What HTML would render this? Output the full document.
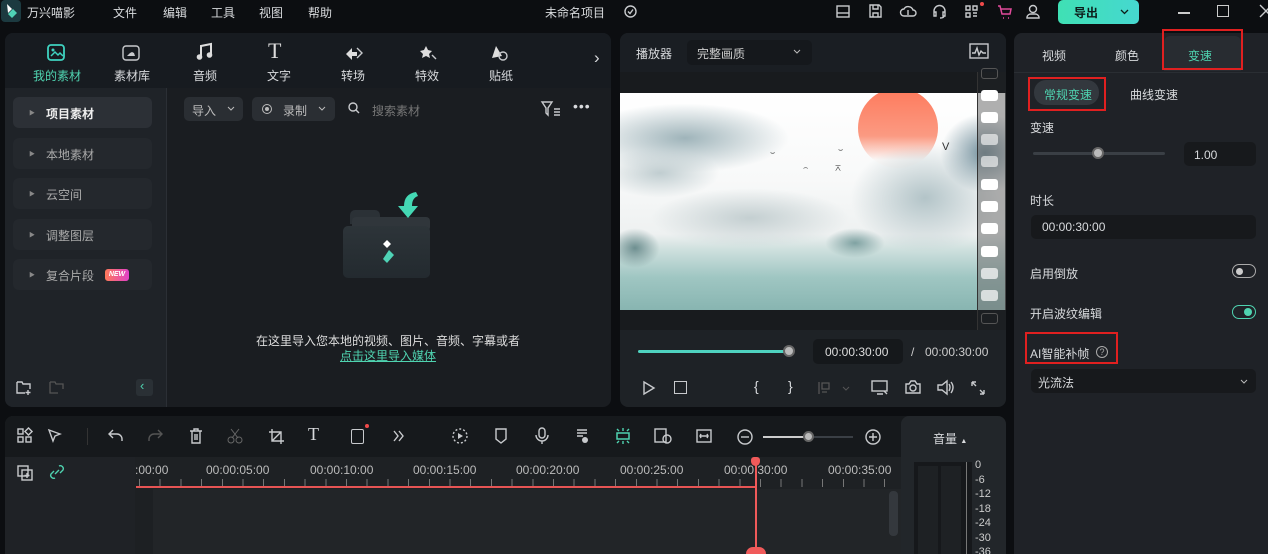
<!DOCTYPE html>
<html style="overflow:hidden"><head><meta charset="utf-8"><style>
*{margin:0;padding:0;box-sizing:border-box}
html,body{width:1268px;height:554px;overflow:hidden}
body{background:#0c0e11;font-family:"Liberation Sans","Noto Sans CJK SC",sans-serif;color:#d8dadd;font-size:12px;position:relative}
.a{position:absolute}
.t{position:absolute;white-space:nowrap}
svg{position:absolute;overflow:visible}
.ic{stroke:#c8cacd;fill:none;stroke-width:1.4}
.h{position:absolute;left:981px;width:17px;height:11px;border-radius:3px;background:#fff}
.ho{position:absolute;left:981px;width:17px;height:11px;border-radius:3px;border:1.3px solid #555}
</style></head><body>
<!-- title bar -->
<div class="a" style="left:1px;top:0;width:20px;height:22px;background:#1c3a40;border-radius:4px"></div>
<svg style="left:4px;top:3px" width="14" height="16"><path d="M3 1l5 5-4 4z" fill="#fff"/><path d="M9 6l4 4-5 5-4-4z" fill="#4fd3b6"/></svg>
<div class="t" style="left:27px;top:4px;font-size:12px">万兴喵影</div>
<div class="t" style="left:113px;top:4px">文件</div>
<div class="t" style="left:163px;top:4px">编辑</div>
<div class="t" style="left:211px;top:4px">工具</div>
<div class="t" style="left:259px;top:4px">视图</div>
<div class="t" style="left:308px;top:4px">帮助</div>
<div class="t" style="left:545px;top:4px">未命名项目</div>
<svg style="left:624px;top:5px" width="13" height="13"><circle cx="6.5" cy="6.5" r="5.5" class="ic" stroke="#888"/><path d="M4 6.5l2 2 3-4" class="ic" stroke="#888"/></svg>
<svg style="left:836px;top:5px" width="14" height="13"><rect x="1" y="1" width="12" height="11" class="ic"/><path d="M1 8h12" class="ic"/></svg>
<svg style="left:869px;top:4px" width="13" height="14"><path d="M1 1h9l2 2v10H1z M4 1v4h5V1 M4 13V9h5v4" class="ic"/></svg>
<svg style="left:900px;top:4px" width="16" height="14"><path d="M4 12a3.5 3.5 0 010-7 5 5 0 019 1 3 3 0 010 6z" class="ic"/><path d="M8 6v5" class="ic"/></svg>
<svg style="left:932px;top:4px" width="15" height="15"><path d="M2 9V7a5.5 5.5 0 0111 0v2 M2 8h2v4H2z M11 8h2v4h-2z M12 12q0 2-4 2" class="ic"/></svg>
<svg style="left:965px;top:5px" width="13" height="13"><path d="M1 1h4v4H1z M1 8h4v4H1z M8 1h4v4H8z M8 8h4 M8 11h4" class="ic"/></svg>
<div class="a" style="left:980px;top:2px;width:4px;height:4px;border-radius:50%;background:#f04a4a"></div>
<svg style="left:997px;top:5px" width="16" height="14"><path d="M1 1h2l2 8h8l1-5H4 M6 13h1 M11 13h1" stroke="#e04a9a" fill="none" stroke-width="1.5"/></svg>
<svg style="left:1026px;top:4px" width="14" height="15"><circle cx="7" cy="5" r="3.5" class="ic"/><path d="M1 14v-1a4 4 0 014-3h4a4 4 0 014 3v1z" class="ic"/></svg>
<div class="a" style="left:1058px;top:0;width:81px;height:24px;border-radius:5px;background:linear-gradient(90deg,#3fe0b4,#46d8d0)"></div>
<div class="t" style="left:1074px;top:4px;color:#0d1d1a;font-weight:bold">导出</div>
<svg style="left:1120px;top:9px" width="9" height="6"><path d="M1 1l3.5 3.5L8 1" stroke="#0d1d1a" fill="none" stroke-width="1.3"/></svg>
<div class="a" style="left:1178px;top:12px;width:12px;height:1.5px;background:#ccc"></div>
<div class="a" style="left:1217px;top:5px;width:12px;height:12px;border:1.5px solid #ccc"></div>
<svg style="left:1260px;top:5px" width="12" height="12"><path d="M0 0l12 12M12 0L0 12" class="ic"/></svg>

<!-- media panel -->
<div class="a" style="left:5px;top:33px;width:606px;height:374px;background:#1a1d21;border-radius:8px;overflow:hidden">
 <div class="a" style="left:0;top:0;width:606px;height:55px;background:#171b20"></div>
 <div class="a" style="left:0;top:55px;width:162px;height:319px;background:#1f2328;border-right:1px solid #2b2f35"></div>
</div>
<svg style="left:47px;top:44px" width="20" height="18"><rect x="1" y="1" width="16" height="15" rx="3" stroke="#3fd3c0" fill="none" stroke-width="1.8"/><path d="M4 12l4-4 3 3 2-2 3 3" stroke="#3fd3c0" fill="none" stroke-width="1.5"/><circle cx="6" cy="6" r="1.5" fill="#3fd3c0"/></svg>
<div class="t" style="left:33px;top:67px;color:#4fd3b0">我的素材</div>
<svg style="left:122px;top:45px" width="18" height="16"><rect x="1" y="1" width="16" height="14" rx="3" class="ic" stroke-width="1.6"/><path d="M5 11h8l-1-3-2-1-2 1z" fill="#c8cacd"/></svg>
<div class="t" style="left:114px;top:67px">素材库</div>
<svg style="left:196px;top:43px" width="18" height="18"><path d="M5 14V3l10-2v11" stroke="#ddd" fill="none" stroke-width="2"/><circle cx="3.5" cy="14" r="2.8" fill="#ddd"/><circle cx="13.5" cy="12" r="2.8" fill="#ddd"/></svg>
<div class="t" style="left:193px;top:67px">音频</div>
<div class="t" style="left:268px;top:38px;font-size:22px;font-family:'Liberation Serif',serif;color:#ddd">T</div>
<div class="t" style="left:267px;top:67px">文字</div>
<svg style="left:344px;top:45px" width="22" height="16"><path d="M2 9l6-6v4h5v4H8v4z" fill="#ddd"/><path d="M13 3l5 5-5 5" class="ic"/></svg>
<div class="t" style="left:341px;top:67px">转场</div>
<svg style="left:418px;top:43px" width="20" height="18"><path d="M8 3l2 4 4 1-3 3 1 4-4-2-4 2 1-4-3-3 4-1z" fill="#ddd"/><path d="M14 12l4 4" class="ic"/></svg>
<div class="t" style="left:415px;top:67px">特效</div>
<svg style="left:490px;top:44px" width="20" height="18"><path d="M2 14L6 2l6 10z" fill="#ddd"/><circle cx="13" cy="12" r="4" class="ic"/></svg>
<div class="t" style="left:489px;top:67px">贴纸</div>
<div class="t" style="left:594px;top:48px;font-size:17px">›</div>

<!-- sidebar items -->
<div class="a" style="left:13px;top:97px;width:139px;height:31px;background:#2c3036;border-radius:6px"></div>
<div class="t" style="left:29px;top:108px;font-size:6px;color:#888">▶</div><div class="t" style="left:46px;top:105px;font-weight:bold;color:#eee">项目素材</div>
<div class="a" style="left:13px;top:138px;width:139px;height:31px;background:#24282d;border-radius:6px"></div>
<div class="t" style="left:29px;top:149px;font-size:6px;color:#888">▶</div><div class="t" style="left:46px;top:146px;color:#aaa">本地素材</div>
<div class="a" style="left:13px;top:178px;width:139px;height:31px;background:#24282d;border-radius:6px"></div>
<div class="t" style="left:29px;top:189px;font-size:6px;color:#888">▶</div><div class="t" style="left:46px;top:186px;color:#aaa">云空间</div>
<div class="a" style="left:13px;top:219px;width:139px;height:31px;background:#24282d;border-radius:6px"></div>
<div class="t" style="left:29px;top:230px;font-size:6px;color:#888">▶</div><div class="t" style="left:46px;top:227px;color:#aaa">调整图层</div>
<div class="a" style="left:13px;top:259px;width:139px;height:31px;background:#24282d;border-radius:6px"></div>
<div class="t" style="left:29px;top:270px;font-size:6px;color:#888">▶</div><div class="t" style="left:46px;top:267px;color:#aaa">复合片段</div>
<div class="t" style="left:105px;top:269px;width:24px;height:12px;border-radius:3px;background:linear-gradient(90deg,#ff7a59,#e040c8);font-size:7px;font-style:italic;font-weight:bold;color:#fff;text-align:center;line-height:12px">NEW</div>
<svg style="left:16px;top:380px" width="16" height="15"><path d="M1 2h5l1 2h7v5 M1 2v11h8 M12 10v5 M9.5 12.5h5" class="ic"/></svg>
<svg style="left:49px;top:380px" width="16" height="15"><path d="M1 2h5l1 2h7v5 M1 2v11h8" stroke="#555" fill="none" stroke-width="1.3"/></svg>
<div class="a" style="left:136px;top:379px;width:17px;height:17px;background:#2a3035;border-radius:3px"></div>
<div class="t" style="left:140px;top:378px;color:#4fd3b0;font-size:13px">‹</div>

<!-- media toolbar -->
<div class="a" style="left:184px;top:97px;width:59px;height:24px;background:#2a2e33;border-radius:5px"></div>
<div class="t" style="left:192px;top:102px;color:#bbb">导入</div>
<svg style="left:227px;top:106px" width="8" height="5"><path d="M1 1l3 3 3-3" stroke="#bbb" fill="none"/></svg>
<div class="a" style="left:252px;top:97px;width:83px;height:24px;background:#2a2e33;border-radius:5px"></div>
<div class="a" style="left:262px;top:104px;width:10px;height:10px;border:1.5px solid #bbb;border-radius:50%"></div><div class="a" style="left:265px;top:107px;width:4px;height:4px;background:#bbb;border-radius:50%"></div>
<div class="t" style="left:283px;top:102px;color:#bbb">录制</div>
<svg style="left:318px;top:106px" width="8" height="5"><path d="M1 1l3 3 3-3" stroke="#bbb" fill="none"/></svg>
<svg style="left:348px;top:102px" width="12" height="12"><circle cx="5" cy="5" r="4" class="ic"/><path d="M8 8l3 3" class="ic"/></svg>
<div class="t" style="left:372px;top:102px;color:#777">搜索素材</div>
<svg style="left:541px;top:101px" width="20" height="16"><path d="M1 1h10l-4 6v7l-2-2V7z" class="ic"/><path d="M13 8h6M13 11h6M13 14h6" class="ic"/></svg>
<div class="t" style="left:573px;top:98px;font-size:14px;letter-spacing:1px">•••</div>

<!-- folder illustration -->
<div class="a" style="left:350px;top:210px;width:30px;height:14px;background:#2b3136;border-radius:5px 5px 0 0"></div>
<div class="a" style="left:352px;top:217px;width:78px;height:14px;background:#30363b;border-radius:4px"></div>
<div class="a" style="left:343px;top:226px;width:87px;height:52px;background:linear-gradient(#2d3439,#232a2f);border-radius:5px"></div>
<svg style="left:380px;top:238px" width="22" height="30"><path d="M3 6l4-4 4 4-4 4z" fill="#fff"/><path d="M9 12l5 5-7 8-4-4z" fill="#4fd3b6"/></svg>
<svg style="left:396px;top:190px" width="28" height="30"><path d="M20 2q-12 2-12 14h-6l10 12 10-12h-6q0-8 6-10z" fill="#44d8b4"/></svg>
<div class="t" style="left:256px;top:332px;color:#ddd;font-size:12px">在这里导入您本地的视频、图片、音频、字幕或者</div>
<div class="t" style="left:340px;top:347px;color:#4fd3b0;text-decoration:underline">点击这里导入媒体</div>

<!-- player -->
<div class="a" style="left:620px;top:33px;width:386px;height:374px;background:#1e2226;border-radius:8px;overflow:hidden">
 <div class="a" style="left:0;top:0;width:386px;height:39px;background:#1a1e23"></div>
 <div class="a" style="left:0;top:39px;width:386px;height:258px;background:#181b1e"></div>
</div>
<div class="t" style="left:636px;top:45px">播放器</div>
<div class="a" style="left:687px;top:40px;width:125px;height:25px;background:#15181c;border-radius:5px"></div>
<div class="t" style="left:697px;top:45px;color:#ccc">完整画质</div>
<svg style="left:793px;top:49px" width="8" height="5"><path d="M1 1l3 3 3-3" stroke="#bbb" fill="none"/></svg>
<svg style="left:969px;top:43px" width="20" height="16"><rect x="1" y="1" width="18" height="14" class="ic"/><path d="M3 10h3l2-5 2 7 2-4 2 2h3" class="ic"/></svg>
<!-- video image -->
<div class="a" style="left:620px;top:93px;width:385px;height:217px;overflow:hidden;background:linear-gradient(#ffffff 0%,#f8f9f9 40%,#eef1f1 65%,#cfe0de 72%,#9fc6c2 85%,#88b5b1 100%)">
 <div class="a" style="left:238px;top:-5px;width:80px;height:80px;border-radius:50%;background:linear-gradient(#fe7a5c 0%,#fb9a82 60%,rgba(255,240,235,0.2) 90%)"></div>
 <div class="a" style="left:-40px;top:10px;width:210px;height:70px;border-radius:50%;background:radial-gradient(#9fb4ba,rgba(200,212,214,0) 70%)"></div>
 <div class="a" style="left:-20px;top:55px;width:120px;height:50px;border-radius:50%;background:radial-gradient(#c0cdd0,rgba(200,212,214,0) 70%)"></div>
 <div class="a" style="left:30px;top:95px;width:200px;height:60px;border-radius:50%;background:radial-gradient(#c4cfd1,rgba(220,228,229,0) 70%)"></div>
 <div class="a" style="left:230px;top:50px;width:150px;height:110px;border-radius:50%;background:radial-gradient(#b3c4c8,rgba(180,196,200,0) 70%)"></div>
 <div class="a" style="left:320px;top:20px;width:90px;height:80px;border-radius:50%;background:radial-gradient(#6f8d9a,rgba(120,150,160,0) 70%)"></div>
 <div class="a" style="left:-10px;top:135px;width:50px;height:40px;border-radius:50%;background:radial-gradient(#6e8f90,rgba(110,143,144,0) 70%)"></div>
 <div class="a" style="left:205px;top:135px;width:60px;height:30px;border-radius:50%;background:radial-gradient(#7fa2a2,rgba(127,162,162,0) 70%)"></div>
 <div class="t" style="left:150px;top:55px;font-size:8px;color:#222">⌣</div>
 <div class="t" style="left:218px;top:52px;font-size:8px;color:#222">⌣</div>
 <div class="t" style="left:183px;top:70px;font-size:8px;color:#222">⌢</div>
 <div class="t" style="left:214px;top:70px;font-size:8px;color:#222">⌅</div>
 <div class="t" style="left:322px;top:48px;font-size:11px;color:#333">V</div>
</div>
<div class="a" style="left:977px;top:72px;width:29px;height:258px;background:rgba(110,110,110,0.55);border-left:1px solid #333"></div>
<div class="a" style="left:977px;top:72px;width:29px;height:21px;background:#1c1f22;border-left:1px solid #333"></div>
<div class="a" style="left:977px;top:310px;width:29px;height:20px;background:#1c1f22;border-left:1px solid #333"></div>
<div class="ho" style="top:68px"></div>
<div class="h" style="top:90px"></div><div class="h" style="top:112px"></div><div class="h" style="top:134px;opacity:.6"></div><div class="h" style="top:156px;opacity:.6"></div><div class="h" style="top:179px"></div><div class="h" style="top:201px"></div><div class="h" style="top:223px"></div><div class="h" style="top:246px"></div><div class="h" style="top:268px;opacity:.7"></div><div class="h" style="top:290px;opacity:.7"></div>
<div class="ho" style="top:313px"></div>
<!-- controls -->
<div class="a" style="left:638px;top:350px;width:152px;height:3px;background:#4fd3c0;border-radius:2px"></div>
<div class="a" style="left:783px;top:345px;width:12px;height:12px;border-radius:50%;background:#bbb;border:2px solid #666"></div>
<div class="a" style="left:813px;top:339px;width:90px;height:25px;background:#15181b;border-radius:5px"></div>
<div class="t" style="left:825px;top:345px;color:#ddd">00:00:30:00</div>
<div class="t" style="left:911px;top:345px;color:#ccc">/</div>
<div class="t" style="left:925px;top:345px;color:#ccc">00:00:30:00</div>
<svg style="left:643px;top:381px" width="12" height="14"><path d="M1 1l10 6-10 6z" class="ic"/></svg>
<div class="a" style="left:674px;top:381px;width:13px;height:13px;border:1.4px solid #c8cacd"></div>
<div class="t" style="left:754px;top:378px;font-size:14px">{</div><div class="t" style="left:788px;top:378px;font-size:14px">}</div>
<svg style="left:818px;top:381px" width="14" height="14"><path d="M1 1v12 M4 2h7v6H4z M4 11h5" stroke="#555" fill="none" stroke-width="1.3"/></svg>
<svg style="left:842px;top:386px" width="8" height="5"><path d="M1 1l3 3 3-3" stroke="#555" fill="none"/></svg>
<svg style="left:871px;top:380px" width="18" height="15"><rect x="1" y="1" width="15" height="10" class="ic"/><path d="M6 14h6 M13 11l3 3" class="ic"/></svg>
<svg style="left:905px;top:380px" width="16" height="14"><path d="M1 4h3l2-3h4l2 3h3v9H1z" class="ic"/><circle cx="8" cy="8" r="3" class="ic"/></svg>
<svg style="left:937px;top:380px" width="18" height="15"><path d="M1 5h4l5-4v13l-5-4H1z M12 4q2 3 0 7 M14 2q4 5 0 11" class="ic"/></svg>
<svg style="left:971px;top:381px" width="14" height="14"><path d="M1 1l4 4M1 1v4M1 1h4 M13 13l-4-4M13 13V9M13 13H9" class="ic"/></svg>

<!-- right panel -->
<div class="a" style="left:1014px;top:33px;width:254px;height:521px;background:#1f2227;border-radius:8px 0 0 0"></div>
<div class="t" style="left:1042px;top:47px">视频</div>
<div class="t" style="left:1115px;top:47px">颜色</div>
<div class="a" style="left:1164px;top:36px;width:77px;height:35px;background:#282c31;border-radius:6px 6px 0 0"></div>
<div class="a" style="left:1162px;top:29px;width:81px;height:41px;border:2px solid #e02020"></div>
<div class="t" style="left:1188px;top:47px;color:#4fd3b0">变速</div>
<div class="a" style="left:1014px;top:72px;width:254px;height:1px;background:#2a2e33"></div>
<div class="a" style="left:1034px;top:80px;width:65px;height:25px;background:#33383e;border-radius:12px"></div>
<div class="a" style="left:1028px;top:77px;width:78px;height:34px;border:2px solid #e02020"></div>
<div class="t" style="left:1044px;top:86px;color:#4fd3b0">常规变速</div>
<div class="t" style="left:1130px;top:86px">曲线变速</div>
<div class="t" style="left:1030px;top:119px">变速</div>
<div class="a" style="left:1033px;top:152px;width:132px;height:3px;background:#3a3f45;border-radius:2px"></div>
<div class="a" style="left:1092px;top:147px;width:12px;height:12px;border-radius:50%;background:#bbb;border:2px solid #666"></div>
<div class="a" style="left:1184px;top:142px;width:72px;height:24px;background:#17191c;border-radius:5px"></div>
<div class="t" style="left:1194px;top:148px">1.00</div>
<div class="t" style="left:1030px;top:192px">时长</div>
<div class="a" style="left:1031px;top:215px;width:225px;height:24px;background:#17191c;border-radius:5px"></div>
<div class="t" style="left:1042px;top:220px">00:00:30:00</div>
<div class="t" style="left:1030px;top:265px">启用倒放</div>
<div class="a" style="left:1232px;top:264px;width:24px;height:14px;border:1.5px solid #aaa;border-radius:7px"></div>
<div class="a" style="left:1236px;top:268px;width:7px;height:7px;background:#ccc;border-radius:50%"></div>
<div class="t" style="left:1030px;top:305px">开启波纹编辑</div>
<div class="a" style="left:1232px;top:305px;width:24px;height:14px;border:1.5px solid #4fd3b0;border-radius:7px"></div>
<div class="a" style="left:1244px;top:308px;width:8px;height:8px;background:#4fd3b0;border-radius:50%"></div>
<div class="a" style="left:1025px;top:332px;width:93px;height:32px;border:2px solid #e02020"></div>
<div class="t" style="left:1030px;top:345px">AI智能补帧</div>
<div class="a" style="left:1096px;top:346px;width:12px;height:12px;border:1px solid #aaa;border-radius:50%;font-size:9px;text-align:center;line-height:11px;color:#aaa">?</div>
<div class="a" style="left:1031px;top:369px;width:225px;height:24px;background:#17191c;border-radius:5px"></div>
<div class="t" style="left:1038px;top:374px">光流法</div>
<svg style="left:1240px;top:379px" width="8" height="5"><path d="M1 1l3 3 3-3" stroke="#bbb" fill="none"/></svg>

<!-- timeline -->
<div class="a" style="left:5px;top:416px;width:1001px;height:138px;background:#222528;border-radius:8px 8px 0 0;overflow:hidden">
 <div class="a" style="left:0;top:0;width:1001px;height:41px;background:#16191c"></div>
 <div class="a" style="left:0;top:41px;width:130px;height:97px;background:#1f2226"></div>
 <div class="a" style="left:130px;top:41px;width:766px;height:32px;background:#1e2124"></div>
 <div class="a" style="left:130px;top:73px;width:18px;height:65px;background:#1d2023"></div>
 <div class="a" style="left:884px;top:75px;width:9px;height:45px;background:#34383d;border-radius:4px"></div>
 <div class="a" style="left:896px;top:0;width:105px;height:138px;background:#22262a;border-radius:8px 8px 0 0"></div>
</div>
<svg style="left:17px;top:428px" width="16" height="16"><rect x="1" y="1" width="5" height="5" class="ic"/><rect x="9" y="1" width="5" height="5" class="ic" transform="rotate(45 11.5 3.5)"/><rect x="1" y="9" width="5" height="5" class="ic"/><rect x="9" y="9" width="5" height="5" class="ic"/></svg>
<svg style="left:47px;top:428px" width="16" height="16"><path d="M2 2l11 4-5 2-2 5z" class="ic"/></svg>
<div class="a" style="left:87px;top:428px;width:1px;height:17px;background:#333"></div>
<svg style="left:108px;top:429px" width="16" height="14"><path d="M5 1L1 5l4 4 M1 5h8a5 5 0 015 5v2" class="ic"/></svg>
<svg style="left:147px;top:429px" width="16" height="14"><path d="M11 1l4 4-4 4 M15 5H7a5 5 0 00-5 5v2" stroke="#555" fill="none" stroke-width="1.4"/></svg>
<svg style="left:189px;top:428px" width="14" height="16"><path d="M1 3h12 M5 3V1h4v2 M3 3v12h8V3 M6 6v6M8 6v6" class="ic"/></svg>
<svg style="left:227px;top:428px" width="16" height="16"><circle cx="4" cy="12" r="3" stroke="#666" fill="none"/><circle cx="12" cy="12" r="3" stroke="#666" fill="none"/><path d="M5 10L12 1M11 10L4 1" stroke="#666"/></svg>
<svg style="left:268px;top:428px" width="17" height="17"><path d="M4 1v12h12 M1 4h12v12 M4 13l9-9" class="ic"/></svg>
<div class="t" style="left:308px;top:424px;font-size:18px;font-family:'Liberation Serif',serif">T</div>
<div class="a" style="left:351px;top:429px;width:13px;height:15px;border:1.4px solid #c8cacd;border-radius:2px"></div>
<div class="a" style="left:365px;top:424px;width:4px;height:4px;background:#f04a4a;border-radius:50%"></div>
<svg style="left:393px;top:430px" width="12" height="12"><path d="M1 1l4 5-4 5M6 1l4 5-4 5" class="ic"/></svg>
<svg style="left:452px;top:428px" width="16" height="16"><circle cx="8" cy="8" r="7" class="ic" stroke-dasharray="2 2"/><path d="M6 5l5 3-5 3z" fill="#c8cacd"/></svg>
<svg style="left:495px;top:428px" width="12" height="16"><path d="M1 1h10v10l-5 4-5-4z" class="ic"/></svg>
<svg style="left:535px;top:427px" width="14" height="18"><rect x="4" y="1" width="6" height="10" rx="3" class="ic"/><path d="M1 8a6 6 0 0012 0 M7 14v3" class="ic"/></svg>
<svg style="left:576px;top:428px" width="14" height="16"><path d="M1 2h10M1 5h10M1 8h6" class="ic"/><circle cx="9" cy="12" r="3" fill="#c8cacd"/></svg>
<svg style="left:614px;top:427px" width="18" height="18"><rect x="3" y="6" width="12" height="6" stroke="#4fd3b0" fill="none" stroke-width="1.5"/><path d="M9 1v3M9 14v3M3 2l2 2M15 2l-2 2M3 16l2-2M15 16l-2-2" stroke="#4fd3b0" stroke-width="1.4"/></svg>
<svg style="left:654px;top:428px" width="18" height="16"><rect x="1" y="1" width="11" height="13" class="ic"/><circle cx="13" cy="11" r="4" class="ic"/></svg>
<svg style="left:696px;top:429px" width="16" height="14"><rect x="1" y="1" width="14" height="12" class="ic"/><path d="M4 7h8M5 5l-1 2 1 2M11 5l1 2-1 2" class="ic"/></svg>
<svg style="left:737px;top:429px" width="16" height="16"><circle cx="8" cy="8" r="7" class="ic"/><path d="M4 8h8" class="ic"/></svg>
<div class="a" style="left:763px;top:436px;width:46px;height:2px;background:#ccc"></div>
<div class="a" style="left:809px;top:436px;width:44px;height:2px;background:#3a3f45"></div>
<div class="a" style="left:803px;top:431px;width:11px;height:11px;border-radius:50%;background:#bbb;border:2px solid #666"></div>
<svg style="left:865px;top:429px" width="16" height="16"><circle cx="8" cy="8" r="7" class="ic"/><path d="M4 8h8M8 4v8" class="ic"/></svg>
<div class="t" style="left:933px;top:430px">音量 <span style="font-size:7px">▲</span></div>
<svg style="left:17px;top:465px" width="16" height="16"><rect x="1" y="1" width="10" height="10" class="ic"/><rect x="5" y="5" width="10" height="10" class="ic" fill="#1f2226"/><path d="M10 8v5M7.5 10.5h5" class="ic"/></svg>
<svg style="left:50px;top:464px" width="14" height="16"><path d="M9 2a3 3 0 014 4l-3 3 M5 14a3 3 0 01-4-4l3-3 M5 10l4-4" stroke="#4fd3b0" fill="none" stroke-width="1.4"/></svg>
<!-- ruler -->
<div class="t" style="left:135px;top:463px;color:#bbb">:00:00</div>
<div class="t" style="left:206px;top:463px;color:#bbb">00:00:05:00</div>
<div class="t" style="left:310px;top:463px;color:#bbb">00:00:10:00</div>
<div class="t" style="left:413px;top:463px;color:#bbb">00:00:15:00</div>
<div class="t" style="left:516px;top:463px;color:#bbb">00:00:20:00</div>
<div class="t" style="left:620px;top:463px;color:#bbb">00:00:25:00</div>
<div class="t" style="left:724px;top:463px;color:#bbb">00:00:30:00</div>
<div class="t" style="left:828px;top:463px;color:#bbb">00:00:35:00</div>
<div class="a" style="left:139px;top:479px;width:757px;height:8px;background:repeating-linear-gradient(90deg,#777 0 1px,transparent 1px 20.7px)"></div>
<div class="a" style="left:136px;top:486px;width:620px;height:2px;background:#e65454"></div>
<div class="a" style="left:755px;top:458px;width:1.5px;height:96px;background:#f05a5a"></div>
<div class="a" style="left:751px;top:457px;width:9px;height:9px;background:#f05a5a;border-radius:3px 3px 50% 50%"></div>
<div class="a" style="left:746px;top:547px;width:20px;height:7px;background:#f05a5a;border-radius:10px 10px 0 0"></div>
<!-- volume meter -->
<div class="a" style="left:914px;top:462px;width:58px;height:92px;background:#16181b"></div>
<div class="a" style="left:918px;top:466px;width:20px;height:88px;background:#1e2124"></div>
<div class="a" style="left:941px;top:466px;width:20px;height:88px;background:#1e2124"></div>
<div class="a" style="left:966px;top:462px;width:1px;height:92px;background:#777"></div>
<div class="t" style="left:975px;top:458px;font-size:11px;color:#ccc;line-height:14.5px">0<br>-6<br>-12<br>-18<br>-24<br>-30<br>-36</div>
</body></html>
